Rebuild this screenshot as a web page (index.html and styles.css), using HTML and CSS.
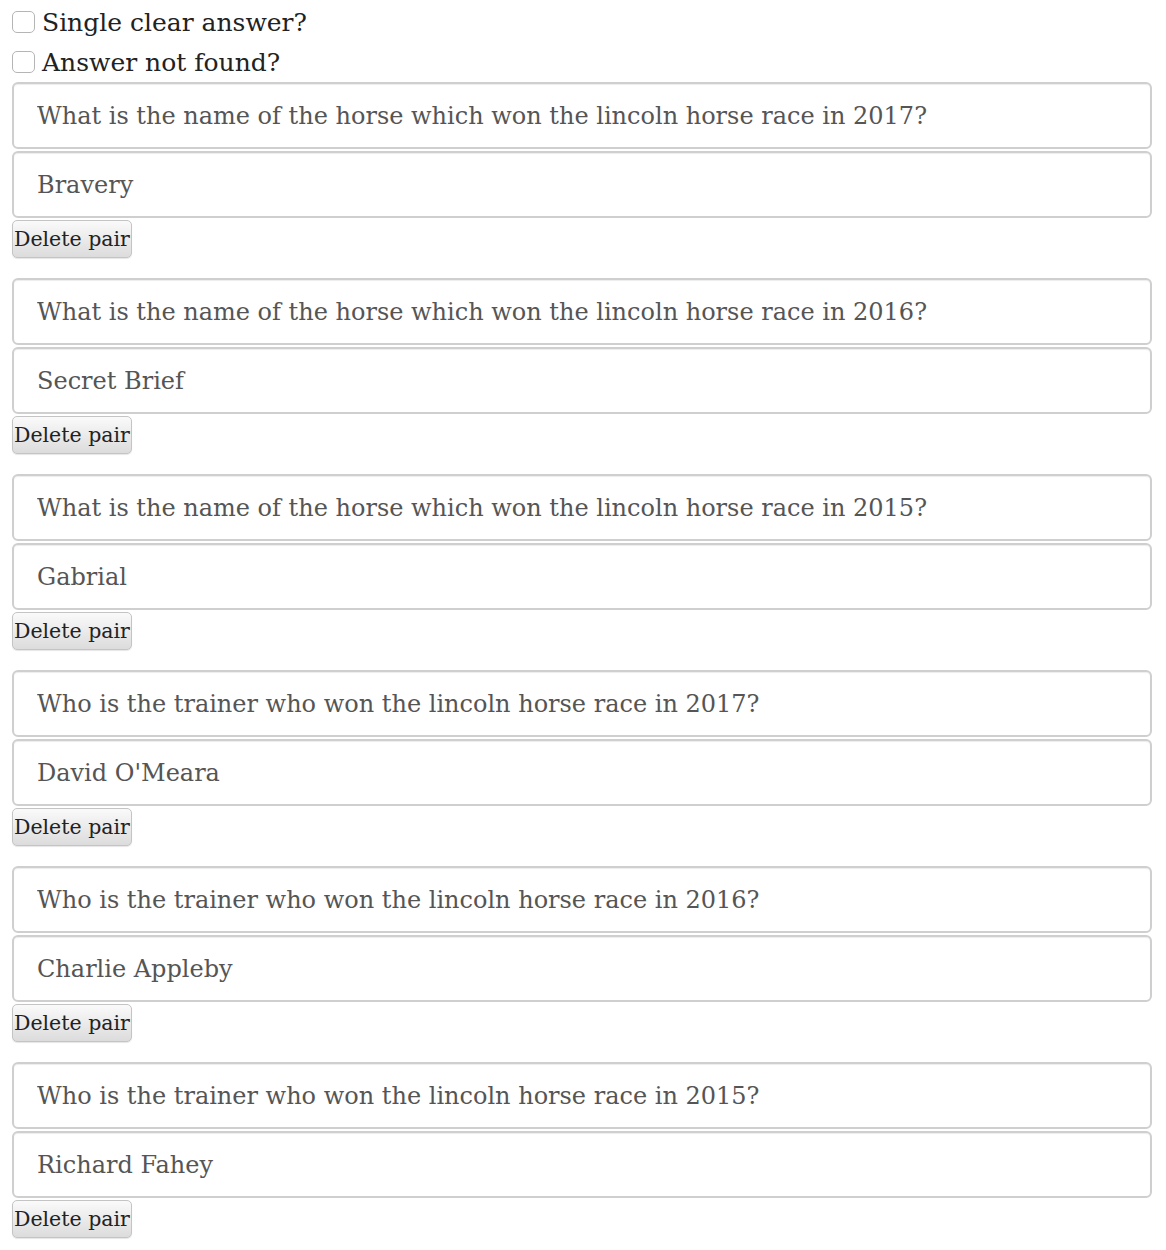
FILE: index.html
```html
<!DOCTYPE html>
<html>
<head>
<meta charset="utf-8">
<link rel="stylesheet" href="styles.css">
</head>
<body>
<div class="page">
  <label class="check"><input type="checkbox"><span>Single clear answer?</span></label>
  <label class="check"><input type="checkbox"><span>Answer not found?</span></label>
  <div class="pair">
    <input class="field" type="text" value="What is the name of the horse which won the lincoln horse race in 2017?">
    <input class="field" type="text" value="Bravery">
    <button class="del">Delete pair</button>
  </div>
  <div class="pair">
    <input class="field" type="text" value="What is the name of the horse which won the lincoln horse race in 2016?">
    <input class="field" type="text" value="Secret Brief">
    <button class="del">Delete pair</button>
  </div>
  <div class="pair">
    <input class="field" type="text" value="What is the name of the horse which won the lincoln horse race in 2015?">
    <input class="field" type="text" value="Gabrial">
    <button class="del">Delete pair</button>
  </div>
  <div class="pair">
    <input class="field" type="text" value="Who is the trainer who won the lincoln horse race in 2017?">
    <input class="field" type="text" value="David O'Meara">
    <button class="del">Delete pair</button>
  </div>
  <div class="pair">
    <input class="field" type="text" value="Who is the trainer who won the lincoln horse race in 2016?">
    <input class="field" type="text" value="Charlie Appleby">
    <button class="del">Delete pair</button>
  </div>
  <div class="pair">
    <input class="field" type="text" value="Who is the trainer who won the lincoln horse race in 2015?">
    <input class="field" type="text" value="Richard Fahey">
    <button class="del">Delete pair</button>
  </div>
</div>
</body>
</html>
```
FILE: styles.css
```css
html, body {
  margin: 0;
  padding: 0;
  background: #fff;
}
.page {
  padding: 2px 14px 0 12px;
  font-family: "DejaVu Serif", Georgia, serif;
  color: #222;
}
.check {
  display: flex;
  align-items: center;
  height: 40px;
  font-size: 25px;
}
.check input {
  appearance: none;
  -webkit-appearance: none;
  flex: none;
  width: 23px;
  height: 22px;
  margin: 0 7px 0 0;
  border: 1px solid #b5b5b5;
  border-radius: 5px;
  background: #fff;
}
.pair {
  display: flex;
  flex-direction: column;
  align-items: flex-start;
  gap: 2px;
  margin-bottom: 20px;
}
.field {
  box-sizing: border-box;
  width: 100%;
  height: 67px;
  margin: 0;
  padding: 0 23px;
  font-family: "DejaVu Serif", Georgia, serif;
  font-size: 24px;
  color: #555;
  border: 2px solid #cfcfcf;
  border-radius: 6px;
  box-shadow: inset 0 1px 1px rgba(0,0,0,0.075);
  background: #fff;
}
.del {
  margin: 0;
  padding: 0 1px;
  height: 38px;
  font-family: "DejaVu Serif", Georgia, serif;
  font-size: 20.5px;
  color: #222;
  white-space: nowrap;
  border: 1px solid #c4c4c4;
  border-radius: 5px;
  background: linear-gradient(#fafafa, #dcdcdc);
  box-shadow: 0 1px 1px rgba(0,0,0,0.1);
}
```
